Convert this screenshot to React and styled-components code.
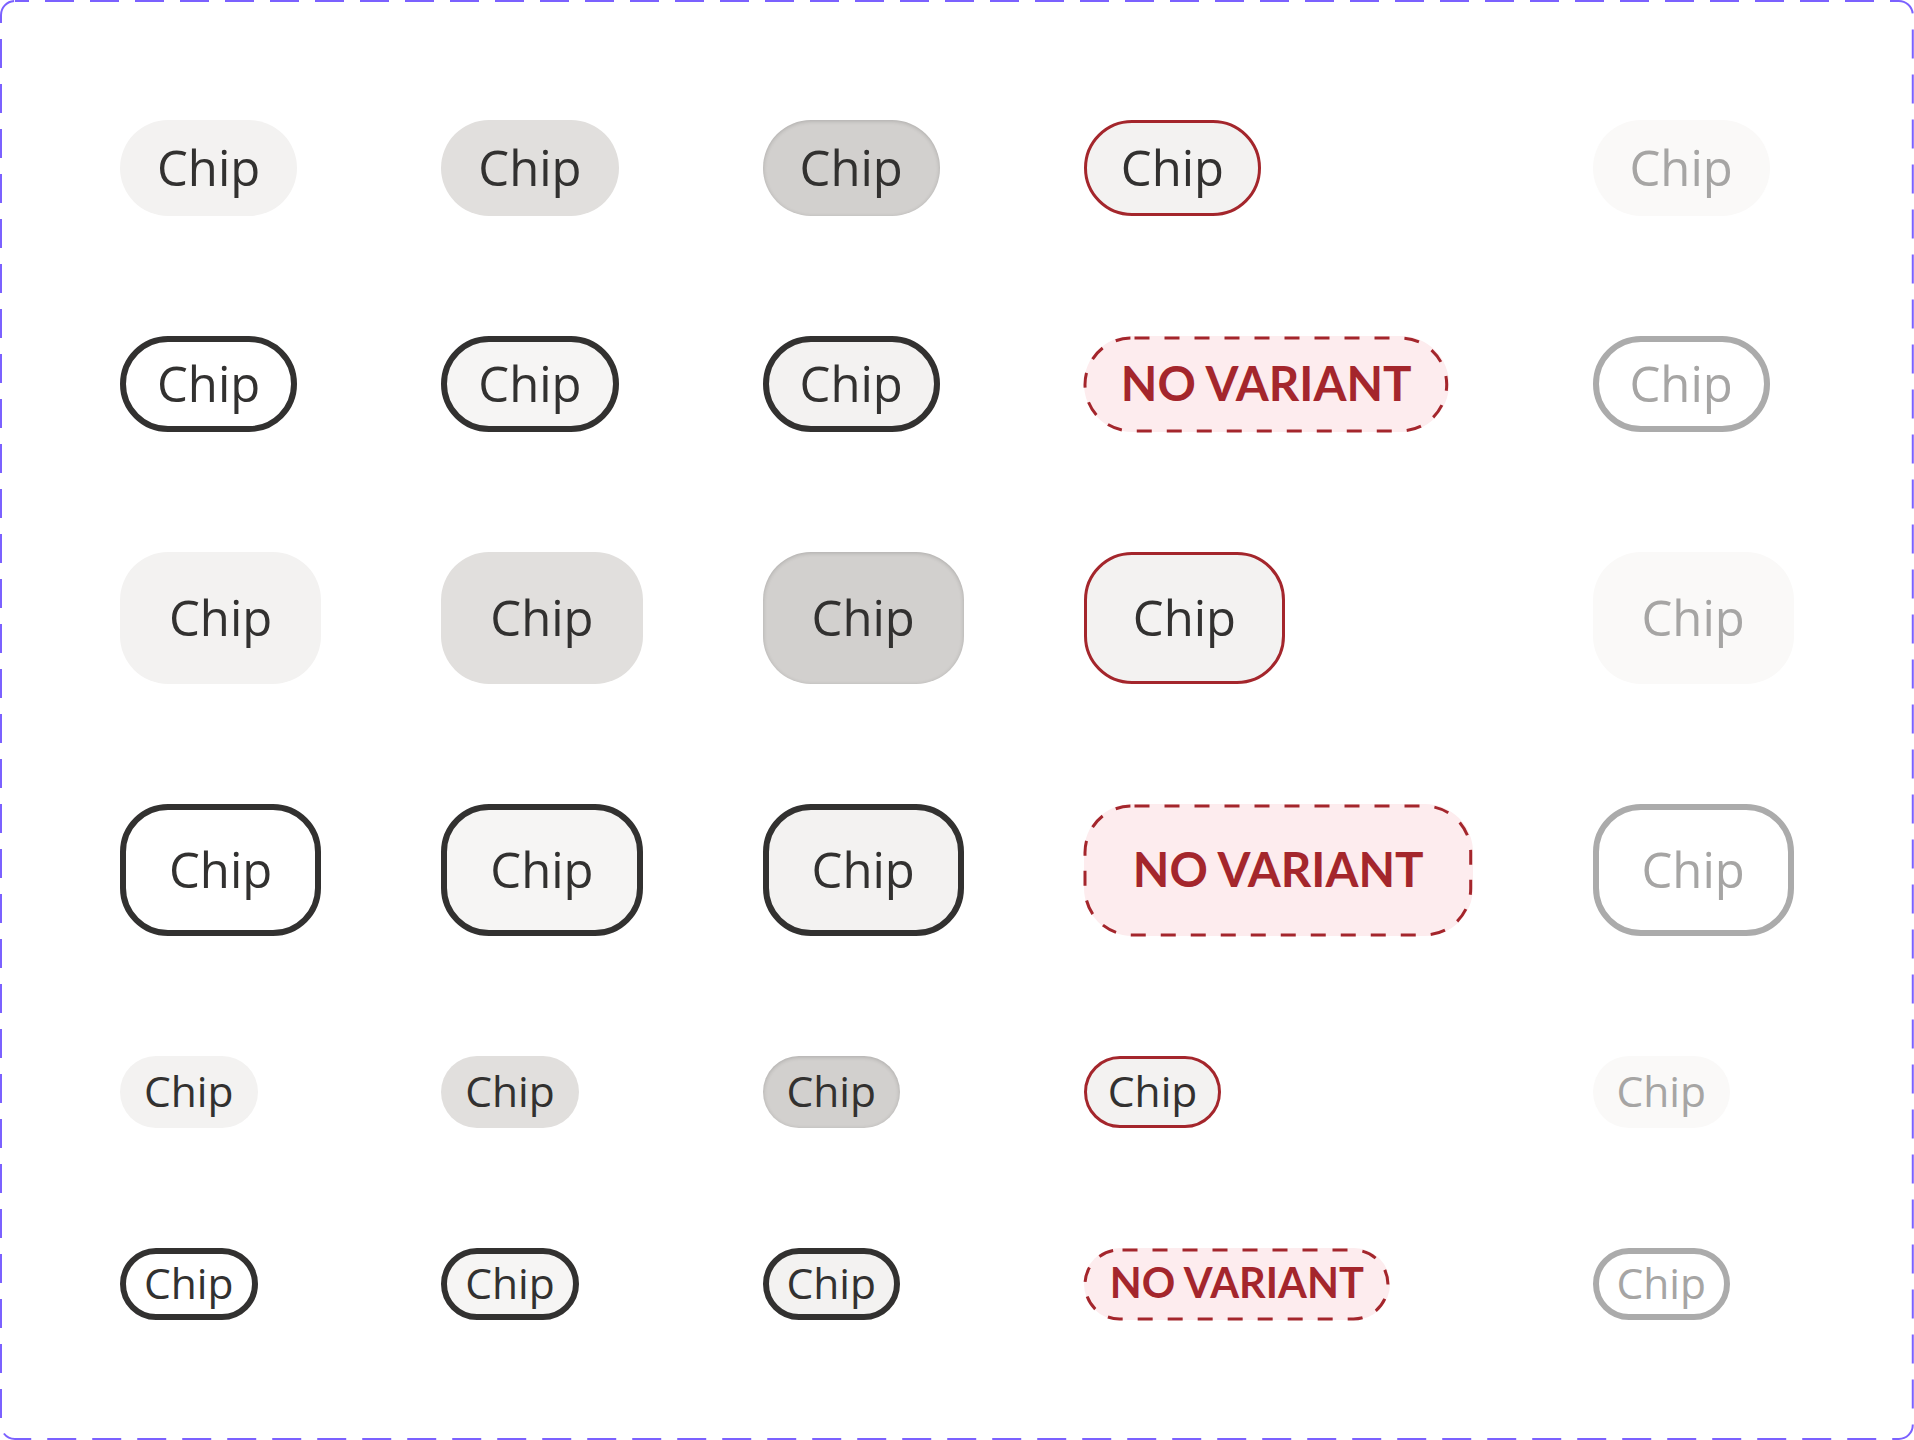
import React from "react";
import styled, { createGlobalStyle, css } from "styled-components";

const GlobalStyle = createGlobalStyle`
  html, body {
    margin: 0;
    padding: 0;
    background: #ffffff;
  }
  body {
    font-family: "Open Sans", "Noto Sans", sans-serif;
  }
`;

const SIZES = {
  sm: { height: 72, padX: 24, radius: 36, font: 42.5, nvFont: 41.5, nvPad: 26 },
  md: { height: 96, padX: 37, radius: 48, font: 49, nvFont: 47.5, nvPad: 37 },
  lg: { height: 132, padX: 49, radius: 48, font: 49, nvFont: 47.5, nvPad: 49 },
};

const FILLED = {
  rest: { bg: "#F3F2F1", color: "#323130", bw: 0, bc: "transparent" },
  hover: { bg: "#E1DFDD", color: "#323130", bw: 0, bc: "transparent" },
  pressed: {
    bg: "#D2D0CE",
    color: "#323130",
    bw: 0,
    bc: "transparent",
    shadow: "inset 0 1px 4px rgba(0, 0, 0, 0.18)",
  },
  invalid: { bg: "#F3F2F1", color: "#323130", bw: 3, bc: "#A4262C" },
  disabled: { bg: "#FAF9F8", color: "#A6A5A4", bw: 0, bc: "transparent" },
};

const OUTLINED = {
  rest: { bg: "#FFFFFF", color: "#323130", bw: 6, bc: "#323130" },
  hover: { bg: "#F6F5F4", color: "#323130", bw: 6, bc: "#323130" },
  pressed: { bg: "#F3F2F1", color: "#323130", bw: 6, bc: "#323130" },
  disabled: { bg: "#FFFFFF", color: "#A6A5A4", bw: 6, bc: "#ABABAB" },
};

const Frame = styled.div`
  position: relative;
  display: inline-grid;
  grid-template-columns: repeat(5, auto);
  justify-items: start;
  align-items: center;
  column-gap: 120px;
  row-gap: 120px;
  padding: 120px;
`;

const FrameOutline = styled.svg`
  position: absolute;
  inset: 1px;
  width: calc(100% - 2px);
  height: calc(100% - 2px);
  overflow: visible;
  pointer-events: none;
`;

const Chip = styled.span`
  box-sizing: border-box;
  display: inline-flex;
  align-items: center;
  justify-content: center;
  white-space: nowrap;
  font-family: "Open Sans", "Noto Sans", sans-serif;
  font-weight: 400;
  line-height: 1;
  ${({ $size, $look }) => {
    const s = SIZES[$size];
    return css`
      height: ${s.height}px;
      padding: 0 ${s.padX - $look.bw}px 2px;
      border-radius: ${s.radius}px;
      font-size: ${s.font}px;
      background: ${$look.bg};
      color: ${$look.color};
      border: ${$look.bw}px solid ${$look.bc};
      box-shadow: ${$look.shadow || "none"};
    `;
  }}
`;

const NoVariantChip = styled.span`
  position: relative;
  box-sizing: border-box;
  display: inline-flex;
  align-items: center;
  justify-content: center;
  white-space: nowrap;
  font-family: Lato, "Open Sans", sans-serif;
  font-weight: 700;
  line-height: 1;
  color: #a4262c;
  background: #fdecee;
  ${({ $size }) => {
    const s = SIZES[$size];
    return css`
      height: ${s.height}px;
      padding: 0 ${s.nvPad}px 2px;
      border-radius: ${s.radius}px;
      font-size: ${s.nvFont}px;
    `;
  }}
`;

const DashOutline = styled.svg`
  position: absolute;
  inset: 1.5px;
  width: calc(100% - 3px);
  height: calc(100% - 3px);
  overflow: visible;
  pointer-events: none;
`;

function NoVariant({ size }) {
  const r = SIZES[size].radius - 1.5;
  return (
    <NoVariantChip $size={size}>
      NO VARIANT
      <DashOutline aria-hidden="true">
        <rect
          x="0"
          y="0"
          width="100%"
          height="100%"
          rx={r}
          ry={r}
          fill="none"
          stroke="#A4262C"
          strokeWidth="3"
          strokeDasharray="15 15"
          strokeDashoffset="-3"
        />
      </DashOutline>
    </NoVariantChip>
  );
}

const ROWS = [
  { size: "md", variant: "filled" },
  { size: "md", variant: "outlined" },
  { size: "lg", variant: "filled" },
  { size: "lg", variant: "outlined" },
  { size: "sm", variant: "filled" },
  { size: "sm", variant: "outlined" },
];

const STATES = ["rest", "hover", "pressed", "fourth", "disabled"];

export default function App() {
  return (
    <>
      <GlobalStyle />
      <Frame>
        <FrameOutline aria-hidden="true">
          <rect
            x="0"
            y="0"
            width="100%"
            height="100%"
            rx="14"
            ry="14"
            fill="none"
            stroke="#7B61FF"
            strokeWidth="2"
            strokeDasharray="29 16"
            strokeDashoffset="15"
          />
        </FrameOutline>
        {ROWS.map((row, ri) =>
          STATES.map((state) => {
            const key = `${ri}-${state}`;
            if (state === "fourth") {
              if (row.variant === "outlined") {
                return <NoVariant key={key} size={row.size} />;
              }
              return (
                <Chip key={key} $size={row.size} $look={FILLED.invalid}>
                  Chip
                </Chip>
              );
            }
            const look =
              row.variant === "filled" ? FILLED[state] : OUTLINED[state];
            return (
              <Chip key={key} $size={row.size} $look={look}>
                Chip
              </Chip>
            );
          })
        )}
      </Frame>
    </>
  );
}
